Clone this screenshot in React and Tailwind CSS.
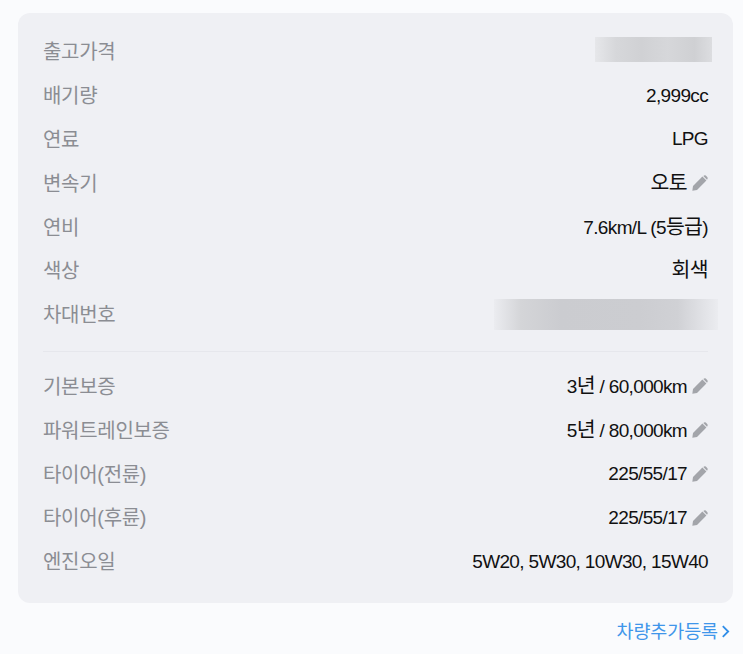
import React from 'react'

const PencilIcon = () => (
  <svg viewBox="0 0 16 16" className="w-[16px] h-[16px] ml-[5px] shrink-0" fill="#a3a5aa">
    <path d="M0.3 15.7 L1 11 L10.4 1.6 L14.4 5.6 L5 15 Z" />
    <path d="M11.3 0.9 L12.1 0.4 Q13 0 13.8 0.6 L15.4 2.2 Q16 3 15.5 3.9 L15 4.8 Z" />
  </svg>
)

const FIRST_ROWS = [
  { label: '출고가격', blur: 'small' },
  { label: '배기량', value: '2,999cc' },
  { label: '연료', value: 'LPG' },
  { label: '변속기', value: '오토', edit: true },
  { label: '연비', value: '7.6km/L (5등급)' },
  { label: '색상', value: '회색' },
  { label: '차대번호', blur: 'large' },
]

const SECOND_ROWS = [
  { label: '기본보증', value: '3년 / 60,000km', edit: true },
  { label: '파워트레인보증', value: '5년 / 80,000km', edit: true },
  { label: '타이어(전륜)', value: '225/55/17', edit: true },
  { label: '타이어(후륜)', value: '225/55/17', edit: true },
  { label: '엔진오일', value: '5W20, 5W30, 10W30, 15W40' },
]

// hangul sits a touch larger than the latin digits next to it
function ValueText({ text }) {
  return text.split(/([가-힣]+)/).map((part, i) =>
    /[가-힣]/.test(part) ? (
      <span key={i} className="text-[20.5px]">{part}</span>
    ) : (
      <span key={i} className="whitespace-pre">{part}</span>
    )
  )
}

function Row({ row }) {
  return (
    <div className="flex items-center justify-between h-[43.8px]">
      <span className="text-[#8b8d93] text-[20px] leading-[24px] tracking-[-0.3px] pt-[3px]">{row.label}</span>
      {row.blur === 'small' && (
        <div className="w-[117px] h-[25px] -mr-[4px] -mt-[3px] bg-[linear-gradient(90deg,#e6e7ea_0%,#d6d7da_18%,#d0d1d4_40%,#d6d7da_62%,#cfd0d3_85%,#dcdde0_100%)]" />
      )}
      {row.blur === 'large' && (
        <div className="w-[224px] h-[31px] -mr-[10px] mt-[1px] bg-[linear-gradient(90deg,#ebecf0_0%,#d4d5d8_12%,#cbccd0_30%,#cccdd1_65%,#d0d1d5_82%,#ebecf0_100%)]" />
      )}
      {row.value && (
        <span className="flex items-center text-[#111111] text-[19px] leading-[24px] tracking-[-0.65px] pt-[2px]">
          <span><ValueText text={row.value} /></span>
          {row.edit && <PencilIcon />}
        </span>
      )}
    </div>
  )
}

export default function App() {
  return (
    <div
      className="min-h-screen bg-[#fafbfd] pl-[18px] pr-[10px] pt-[13px]"
      style={{ fontFamily: '"Liberation Sans", "Noto Sans CJK KR", sans-serif' }}
    >
      <div className="bg-[#eff0f4] rounded-[12px] pl-[25px] pr-[25px] pt-[16px] pb-[20px]">
        {FIRST_ROWS.map((row) => (
          <Row key={row.label} row={row} />
        ))}
        <div className="border-t border-[#e6e7ec] mt-[15px] mb-[12px]" />
        {SECOND_ROWS.map((row) => (
          <Row key={row.label} row={row} />
        ))}
      </div>
      <div className="flex justify-end items-center mt-[17px] pr-[3px] text-[#3f96ea] text-[18.5px] leading-[24px] tracking-[-0.1px]">
        <span>차량추가등록</span>
        <svg viewBox="0 0 10 16" className="w-[9px] h-[15px] ml-[3px]" fill="none" stroke="#2f8de8" strokeWidth="2">
          <path d="M2 2 L8 8 L2 14" />
        </svg>
      </div>
    </div>
  )
}
